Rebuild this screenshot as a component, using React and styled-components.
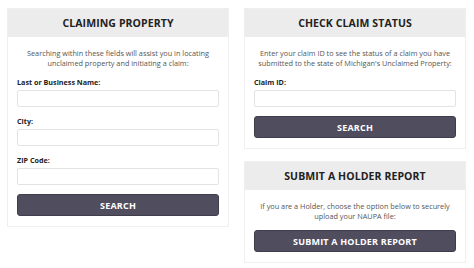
import React from 'react';
import styled, { createGlobalStyle } from 'styled-components';

const GlobalStyle = createGlobalStyle`
  html, body {
    margin: 0;
    padding: 0;
    background: #ffffff;
  }
  body {
    font-family: 'Open Sans', 'Liberation Sans', sans-serif;
    color: #333;
  }
  * {
    box-sizing: border-box;
  }
`;

export default function App() {
  return (
    <>
      <GlobalStyle />
      <Page>
        <Column>
          <Card>
            <CardHeader>Claiming Property</CardHeader>
            <CardBody>
              <Description>
                Searching within these fields will assist you in locating
                <br />
                unclaimed property and initiating a claim:
              </Description>
              <Field>
                <Label>Last or Business Name:</Label>
                <Input type="text" />
              </Field>
              <Field>
                <Label>City:</Label>
                <Input type="text" />
              </Field>
              <Field>
                <Label>ZIP Code:</Label>
                <Input type="text" />
              </Field>
              <Button>Search</Button>
            </CardBody>
          </Card>
        </Column>
        <Column>
          <Card>
            <CardHeader>Check Claim Status</CardHeader>
            <CardBody>
              <Description>
                Enter your claim ID to see the status of a claim you have
                <br />
                submitted to the state of Michigan's Unclaimed Property:
              </Description>
              <Field>
                <Label>Claim ID:</Label>
                <Input type="text" />
              </Field>
              <Button>Search</Button>
            </CardBody>
          </Card>
          <Card>
            <CardHeader>Submit a Holder Report</CardHeader>
            <CardBody>
              <Description>
                If you are a Holder, choose the option below to securely
                <br />
                upload your NAUPA file:
              </Description>
              <Button>Submit a Holder Report</Button>
            </CardBody>
          </Card>
        </Column>
      </Page>
    </>
  );
}

const Page = styled.div`
  display: grid;
  grid-template-columns: 222px 222px;
  column-gap: 15px;
  align-items: start;
  padding: 8px 8px 0 7px;
`;

const Column = styled.div`
  display: flex;
  flex-direction: column;
  gap: 12px;
`;

const Card = styled.div`
  border: 1px solid #efefef;
  background: #fff;
`;

const CardHeader = styled.h2`
  margin: 0;
  height: 28px;
  display: flex;
  align-items: center;
  justify-content: center;
  background: #ececec;
  font-size: 10.5px;
  font-weight: 700;
  letter-spacing: 0.1px;
  text-transform: uppercase;
  color: #222;
`;

const CardBody = styled.div`
  display: flex;
  flex-direction: column;
  gap: 9px;
  padding: 11px 9px 10px;
`;

const Description = styled.p`
  margin: 0;
  font-size: 7.3px;
  line-height: 10px;
  text-align: center;
  white-space: nowrap;
  color: #555;
`;

const Field = styled.div`
  display: flex;
  flex-direction: column;
  gap: 3px;
`;

const Label = styled.label`
  font-size: 7.2px;
  line-height: 10px;
  font-weight: 700;
  color: #222;
`;

const Input = styled.input`
  height: 17px;
  border: 1px solid #e3e3e3;
  border-radius: 2px;
  background: #fff;
  outline: none;
`;

const Button = styled.button`
  height: 22px;
  border: 1px solid #3f3d4c;
  border-radius: 3px;
  background: #504d5f;
  color: #fff;
  font-family: 'Open Sans', 'Liberation Sans', sans-serif;
  font-size: 9px;
  font-weight: 700;
  letter-spacing: 0.2px;
  text-transform: uppercase;
  cursor: pointer;
`;
